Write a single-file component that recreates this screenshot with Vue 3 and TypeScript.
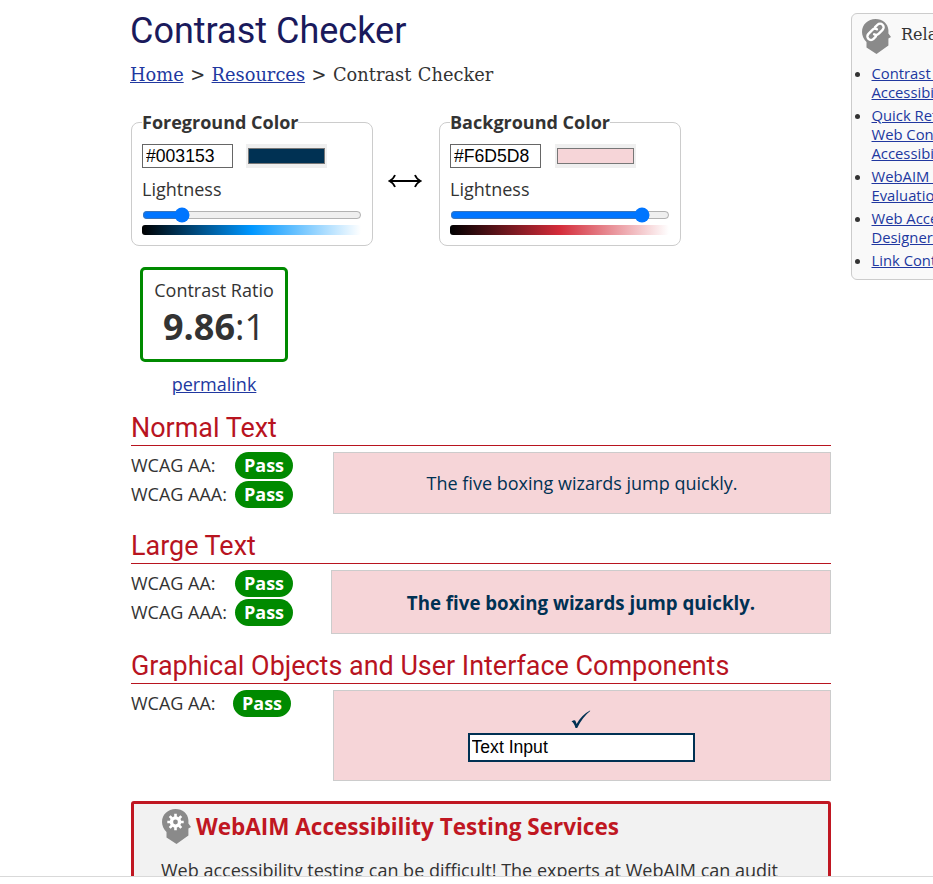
<script setup lang="ts">
import { reactive } from 'vue'

interface ColorPanel {
  id: string
  title: string
  hex: string
  lightness: number
}

interface RelatedLink {
  lines: string[]
}

const panels = reactive<ColorPanel[]>([
  { id: 'fg', title: 'Foreground Color', hex: '#003153', lightness: 15.7 },
  { id: 'bg', title: 'Background Color', hex: '#F6D5D8', lightness: 90 },
])

const related: RelatedLink[] = [
  { lines: ['Contrast and Color', 'Accessibility'] },
  { lines: ['Quick Reference:', 'Web Content', 'Accessibility'] },
  { lines: ['WebAIM Contrast', 'Evaluation'] },
  { lines: ['Web Accessibility for', 'Designers'] },
  { lines: ['Link Contrast Checker'] },
]
</script>

<template>
  <div class="page">
    <div class="viewport">
      <main class="main">
        <h1>Contrast Checker</h1>
        <nav class="crumbs">
          <a href="#">Home</a> &gt; <a href="#">Resources</a> &gt; Contrast Checker
        </nav>

        <div class="pickers">
          <template v-for="(p, i) in panels" :key="p.id">
            <div v-if="i === 1" class="swap">
              <svg width="34" height="14" viewBox="0 0 34 14" fill="none" stroke="#000" stroke-width="1.8">
                <path d="M2 7H32M7 1Q5.5 5 1.5 7Q5.5 9 7 13M27 1Q28.5 5 32.5 7Q28.5 9 27 13" />
              </svg>
            </div>
            <fieldset class="panel" :class="p.id">
              <legend>{{ p.title }}</legend>
              <div class="row">
                <input v-model="p.hex" class="hex" type="text" />
                <input class="swatch" type="color" :value="p.hex.toLowerCase()" />
              </div>
              <label class="light">Lightness</label>
              <input v-model.number="p.lightness" class="range" type="range" min="0" max="100" step="0.1" />
              <div class="gradient"></div>
            </fieldset>
          </template>
        </div>

        <div class="ratio">
          <div class="ratio-label">Contrast Ratio</div>
          <div class="ratio-value"><b>9.86</b>:1</div>
        </div>
        <div class="perma"><a href="#">permalink</a></div>

        <section class="normal">
          <h2>Normal Text</h2>
          <div class="result">
            <div class="levels">
              <div class="level"><span>WCAG AA:</span><b class="pass">Pass</b></div>
              <div class="level"><span>WCAG AAA:</span><b class="pass">Pass</b></div>
            </div>
            <div class="sample">The five boxing wizards jump quickly.</div>
          </div>
        </section>

        <section class="large">
          <h2>Large Text</h2>
          <div class="result">
            <div class="levels">
              <div class="level"><span>WCAG AA:</span><b class="pass">Pass</b></div>
              <div class="level"><span>WCAG AAA:</span><b class="pass">Pass</b></div>
            </div>
            <div class="sample">The five boxing wizards jump quickly.</div>
          </div>
        </section>

        <section class="graphic">
          <h2>Graphical Objects and User Interface Components</h2>
          <div class="result">
            <div class="levels">
              <div class="level"><span>WCAG AA:</span><b class="pass">Pass</b></div>
            </div>
            <div class="sample">
              <svg class="check" width="20" height="19" viewBox="0 0 20 19">
                <path d="M.5 11.5Q3 9.500 4.200 10.500Q5 11.500 5.600 14Q10.500 5 19 .5L19.200 1Q11.500 7 6.200 18H4.500Q3 12.500 .5 11.500Z" fill="#003153" />
              </svg>
              <input class="demo" type="text" value="Text Input" />
            </div>
          </div>
        </section>

        <section class="services">
          <div class="services-head">
            <svg width="29" height="35" viewBox="0 0 29 35">
              <path d="M13.500 0C20.500 0 26 4.500 26.400 11V14.500L29 18L26.400 19.500V26.500L14.500 35L4.500 28.500V23C1.500 20 0 16.500 0 13C0 5.500 6 0 13.500 0Z" fill="#8a8a8a" />
              <g stroke="#fff" fill="none">
                <circle cx="13.500" cy="13" r="4.100" stroke-width="3.400" />
                <path d="M13.500 4.800V8M13.500 18V21.200M5.300 13H8.500M18.500 13H21.700M7.700 7.200L10 9.500M17 16.500L19.300 18.800M7.700 18.800L10 16.500M17 9.500L19.300 7.200" stroke-width="2.600" />
              </g>
            </svg>
            <h3>WebAIM Accessibility Testing Services</h3>
          </div>
          <p>Web accessibility testing can be difficult! The experts at WebAIM can audit</p>
        </section>
      </main>

      <aside class="related">
        <div class="related-head">
          <svg width="29" height="35" viewBox="0 0 29 35">
            <path d="M13.500 0C20.500 0 26 4.500 26.400 11V14.500L29 18L26.400 19.500V26.500L14.500 35L4.500 28.500V23C1.500 20 0 16.500 0 13C0 5.500 6 0 13.500 0Z" fill="#8a8a8a" />
            <g transform="translate(13.500 12.800) rotate(-45)" fill="none" stroke="#fff" stroke-width="2.400" stroke-linecap="round">
              <path d="M2.800 -.8A3.600 3.600 0 0 0 -.8 -3.600H-6.400A3.600 3.600 0 0 0 -6.400 3.600H-3" />
              <path d="M-2.800 .8A3.600 3.600 0 0 0 .8 3.600H6.400A3.600 3.600 0 0 0 6.400 -3.600H3" />
            </g>
          </svg>
          <span>Related</span>
        </div>
        <ul>
          <li v-for="(r, i) in related" :key="i">
            <a href="#"><template v-for="(l, j) in r.lines" :key="j"><br v-if="j > 0" />{{ l }}</template></a>
          </li>
        </ul>
      </aside>
    </div>
  </div>
</template>

<style>
body {
  background: #fff;
}
</style>

<style scoped>
.page {
  width: 933px;
  height: 884px;
  overflow: hidden;
  background: #fff;
  font-family: 'Open Sans', sans-serif;
  font-size: 18px;
  color: #333;
}
.page * {
  box-sizing: border-box;
}
.viewport {
  display: flex;
  align-items: flex-start;
  height: 877px;
  padding-left: 131px;
  overflow: hidden;
  border-bottom: 1px solid #d9d9d9;
}
a {
  color: #2138a0;
  text-decoration: underline;
}
.main {
  flex: none;
  width: 700px;
}
h1 {
  margin: 0 0 0 -1px;
  height: 60px;
  font: 400 36px/62px Roboto, sans-serif;
  color: #1a1a5c;
  white-space: nowrap;
}
.crumbs {
  height: 30px;
  margin-left: -1px;
  font: 17.8px/30px 'DejaVu Serif', serif;
  letter-spacing: 0.02px;
  word-spacing: 0.8px;
  white-space: nowrap;
}
.pickers {
  display: flex;
  align-items: flex-start;
  padding-top: 20px;
}
.panel {
  flex: none;
  width: 242px;
  height: 136px;
  margin: 0;
  padding: 9px 0 0 10px;
  border: 1px solid #ccc;
  border-radius: 8px;
  min-width: 0;
}
legend {
  padding: 0;
  height: 25px;
  line-height: 25px;
  font-weight: 700;
  white-space: nowrap;
}
.row {
  display: flex;
  gap: 13px;
  height: 24px;
}
.panel.bg .row {
  gap: 14px;
}
.hex {
  width: 91px;
  height: 24px;
  margin: 0;
  padding: 1px 3px;
  border: 1px solid #666;
  font: 17.6px 'Liberation Sans', sans-serif;
  color: #000;
}
.swatch {
  width: 81px;
  height: 24px;
  margin: 0;
  padding: 0;
  border: 0;
  background: #efefef;
}
.light {
  display: block;
  height: 39px;
  line-height: 42px;
}
.range {
  display: block;
  width: 220px;
  height: 16px;
  margin: 0;
}
.gradient {
  width: 219px;
  height: 10px;
  margin-top: 2px;
  border-radius: 3px;
}
.fg .gradient {
  background: linear-gradient(90deg, #000, #0097ff 50%, #fff);
}
.bg .gradient {
  background: linear-gradient(90deg, #000, #d42c3a 50%, #fff);
}
.swap {
  width: 66px;
  padding: 64px 0 0 15px;
}
.swap svg {
  display: block;
}
.ratio {
  width: 148px;
  height: 95px;
  margin: 21px 0 0 9px;
  padding-top: 8px;
  border: 3px solid #008a00;
  border-radius: 5px;
  text-align: center;
}
.ratio-label {
  height: 24px;
  line-height: 24px;
}
.ratio-value {
  height: 48px;
  font-size: 36px;
  line-height: 50px;
}
.perma {
  width: 148px;
  height: 44px;
  margin-left: 9px;
  line-height: 44px;
  text-align: center;
}
h2 {
  margin: 0;
  height: 40px;
  border-bottom: 1px solid #b8141f;
  font: 400 26.95px/44px Roboto, sans-serif;
  color: #b8141f;
  white-space: nowrap;
}
.result {
  display: flex;
  justify-content: space-between;
  padding-top: 6px;
}
.levels {
  display: flex;
  flex-direction: column;
  gap: 2px;
}
.level {
  display: flex;
  height: 27px;
  line-height: 27px;
}
.level span {
  width: 104px;
}
.graphic .level span {
  width: 102px;
}
.pass {
  width: 58px;
  border-radius: 14px;
  background: #008a00;
  color: #fff;
  text-align: center;
}
.sample {
  width: 498px;
  height: 62px;
  border: 1px solid #ccc;
  background: #f6d5d8;
  color: #003153;
  line-height: 61px;
  text-align: center;
}
.large .sample {
  width: 500px;
  height: 64px;
  font-weight: 700;
  font-size: 18.7px;
  line-height: 64px;
}
.large,
.graphic {
  padding-top: 10px;
}
.graphic .sample {
  display: flex;
  flex-direction: column;
  align-items: center;
  height: 91px;
  padding: 19px 2px 0 0;
}
.check {
  display: block;
}
.demo {
  width: 227px;
  height: 29px;
  margin: 4px 0 0;
  padding: 0 2px;
  border: 2px solid #003153;
  font: 17.6px 'Liberation Sans', sans-serif;
  color: #000;
  background: #fff;
}
.services {
  height: 200px;
  margin-top: 20px;
  padding: 5px 27px;
  border: 3px solid #c01722;
  border-radius: 3px;
  background: #f2f2f2;
}
.services-head {
  display: flex;
  height: 35px;
  padding-left: 1px;
  gap: 5px;
}
h3 {
  margin: 0;
  font-size: 22.5px;
  line-height: 35px;
  font-weight: 700;
  color: #c01722;
  white-space: nowrap;
}
.services p {
  margin: 14px 0 0;
  line-height: 24px;
  white-space: nowrap;
}
.related {
  flex: none;
  width: 230px;
  height: 267px;
  margin: 13px 0 0 20px;
  padding: 5px 0 0 10px;
  border: 1px solid #ccc;
  border-radius: 6px;
  background: #f9f9f9;
}
.related-head {
  display: flex;
  gap: 10px;
  height: 35px;
  font: 16px/31px 'DejaVu Serif', serif;
}
ul {
  margin: 10px 0 0;
  padding: 0 0 0 9.5px;
  font-size: 14.8px;
  line-height: 19px;
  white-space: nowrap;
}
li {
  margin-bottom: 4px;
}
</style>
